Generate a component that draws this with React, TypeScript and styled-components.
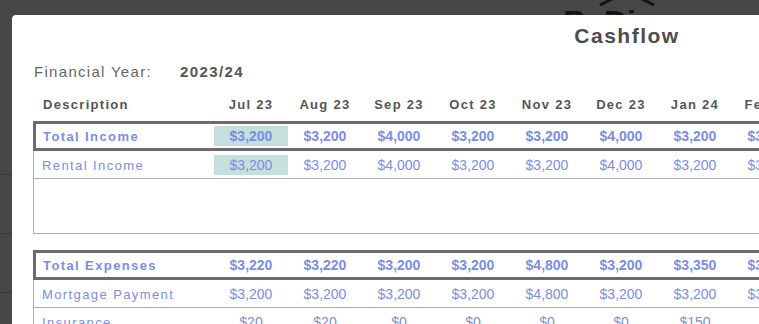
import React from 'react';
import styled, {createGlobalStyle} from 'styled-components';

const GlobalStyle = createGlobalStyle`
    html, body {
        margin: 0;
        padding: 0;
    }
    body {
        background: #474747;
        overflow: hidden;
        font-family: "Liberation Sans", Arial, sans-serif;
    }
`;

const months = ['Jul 23', 'Aug 23', 'Sep 23', 'Oct 23', 'Nov 23', 'Dec 23', 'Jan 24', 'Feb 24', 'Mar 24', 'Apr 24', 'May 24', 'Jun 24'];

interface Line {
    label: string;
    values: number[];
}

interface Group {
    total: Line;
    rows: Line[];
    spacer: number;
    highlight: number;
}

const groups: Group[] = [
    {
        total: {label: 'Total Income', values: [3200, 3200, 4000, 3200, 3200, 4000, 3200, 3200, 3200, 4000, 3200, 3200]},
        rows: [
            {label: 'Rental Income', values: [3200, 3200, 4000, 3200, 3200, 4000, 3200, 3200, 3200, 4000, 3200, 3200]},
        ],
        spacer: 54,
        highlight: 0,
    },
    {
        total: {label: 'Total Expenses', values: [3220, 3220, 3200, 3200, 4800, 3200, 3350, 3200, 3200, 4800, 3200, 3200]},
        rows: [
            {label: 'Mortgage Payment', values: [3200, 3200, 3200, 3200, 4800, 3200, 3200, 3200, 3200, 4800, 3200, 3200]},
            {label: 'Insurance', values: [20, 20, 0, 0, 0, 0, 150, 0, 0, 0, 0, 0]},
        ],
        spacer: 0,
        highlight: -1,
    },
];

const money = (v: number) => `$${v.toLocaleString('en-US')}`;

// page behind the modal
const Backdrop = styled.div`
    width: 100vw;
    height: 100vh;
    overflow: hidden;
`;

const BgTop = styled.div`
    height: 15px;
    overflow: hidden;
    padding-left: 557px;
`;

const BgHeader = styled.div`
    height: 101px;
`;

const Logo = styled.div`
    width: 140px;
    margin-top: -12px;
    display: flex;
    flex-direction: column;
    align-items: center;
`;

// only the tops of the letters peek out above the modal
const LogoText = styled.span`
    display: block;
    height: 9px;
    overflow: hidden;
    font-size: 32px;
    line-height: 32px;
    font-weight: 700;
    color: #141414;
`;

const BgRow = styled.div`
    height: 58px;
    border-bottom: 1px solid #3b3b3b;
`;

const Modal = styled.div`
    position: absolute;
    left: 12px;
    top: 15px;
    width: 1230px;
    height: 600px;
    background: #ffffff;
    border-radius: 4px;
    padding-top: 9px;
    box-sizing: border-box;
`;

const Title = styled.h2`
    margin: 0;
    text-align: center;
    font-size: 21px;
    line-height: 24px;
    font-weight: 700;
    letter-spacing: 1.5px;
    color: #4d4d4d;
`;

const Content = styled.div`
    padding-left: 21px;
`;

const YearRow = styled.div`
    display: flex;
    gap: 28px;
    margin: 15px 0 0 1px;
    font-size: 15px;
    line-height: 18px;
    letter-spacing: 1.3px;
`;

const YearLabel = styled.span`
    color: #666666;
`;

const YearValue = styled.span`
    color: #555555;
    font-weight: 700;
    letter-spacing: 1.4px;
`;

const Table = styled.div`
    width: max-content;
    margin-top: 16px;
`;

const Grid = styled.div<{$desc: number}>`
    display: grid;
    grid-template-columns: ${({$desc}) => $desc}px repeat(${months.length}, 74px);
    align-items: center;
`;

const HeaderRow = styled(Grid)`
    margin-bottom: 8px;
    font-size: 13px;
    line-height: 16px;
    font-weight: 700;
    letter-spacing: 1.3px;
    color: #555555;
`;

const HeadCell = styled.div<{$first?: boolean}>`
    text-align: ${({$first}) => $first ? 'left' : 'center'};
    padding-left: ${({$first}) => $first ? '10px' : '0'};
`;

const Section = styled.div`
    margin-bottom: 16px;
`;

const TotalRow = styled(Grid)`
    border: 3px solid #6b6b6b;
    padding: 2px 0;
    font-weight: 700;
`;

const Row = styled(Grid)`
    border-left: 1px solid #b0b0b0;
    border-right: 1px solid #b0b0b0;
    border-bottom: 1px solid #b0b0b0;
    padding: 4px 0 3px;
`;

const Spacer = styled.div<{$height: number}>`
    height: ${({$height}) => $height}px;
    border-left: 1px solid #b0b0b0;
    border-right: 1px solid #b0b0b0;
    border-bottom: 1px solid #b0b0b0;
`;

const Label = styled.div<{$indent: number}>`
    padding-left: ${({$indent}) => $indent}px;
    font-size: 13px;
    letter-spacing: 1.4px;
    color: #7b8de6;
    white-space: nowrap;
`;

const Amount = styled.div<{$hl: boolean}>`
    height: 20px;
    line-height: 20px;
    text-align: center;
    font-size: 14px;
    color: #7b8de6;
    background: ${({$hl}) => $hl ? '#c4dfdc' : 'transparent'};
`;

const Roof = () => (
    <svg width='64' height='18' viewBox='0 0 64 18'>
        <polyline points='5,17 32,3.5 59,17' fill='none' stroke='#141414' strokeWidth='3' />
    </svg>
);

const App = () => {
    return (
        <>
            <GlobalStyle />
            <Backdrop>
                <BgTop>
                    <Logo>
                        <Roof />
                        <LogoText>ByDisco</LogoText>
                    </Logo>
                </BgTop>
                <BgHeader />
                <BgRow />
                <BgRow />
                <BgRow />
            </Backdrop>

            <Modal>
                <Title>Cashflow</Title>
                <Content>
                    <YearRow>
                        <YearLabel>Financial Year:</YearLabel>
                        <YearValue>2023/24</YearValue>
                    </YearRow>

                    <Table>
                        <HeaderRow $desc={181}>
                            <HeadCell $first>Description</HeadCell>
                            {months.map(m => <HeadCell key={m}>{m}</HeadCell>)}
                        </HeaderRow>

                        {groups.map(group => (
                            <Section key={group.total.label}>
                                <TotalRow $desc={178}>
                                    <Label $indent={7}>{group.total.label}</Label>
                                    {group.total.values.map((v, i) => (
                                        <Amount key={i} $hl={i === group.highlight}>{money(v)}</Amount>
                                    ))}
                                </TotalRow>
                                {group.rows.map(row => (
                                    <Row key={row.label} $desc={180}>
                                        <Label $indent={8}>{row.label}</Label>
                                        {row.values.map((v, i) => (
                                            <Amount key={i} $hl={i === group.highlight}>{money(v)}</Amount>
                                        ))}
                                    </Row>
                                ))}
                                {group.spacer > 0 && <Spacer $height={group.spacer} />}
                            </Section>
                        ))}
                    </Table>
                </Content>
            </Modal>
        </>
    );
};

export default App;
